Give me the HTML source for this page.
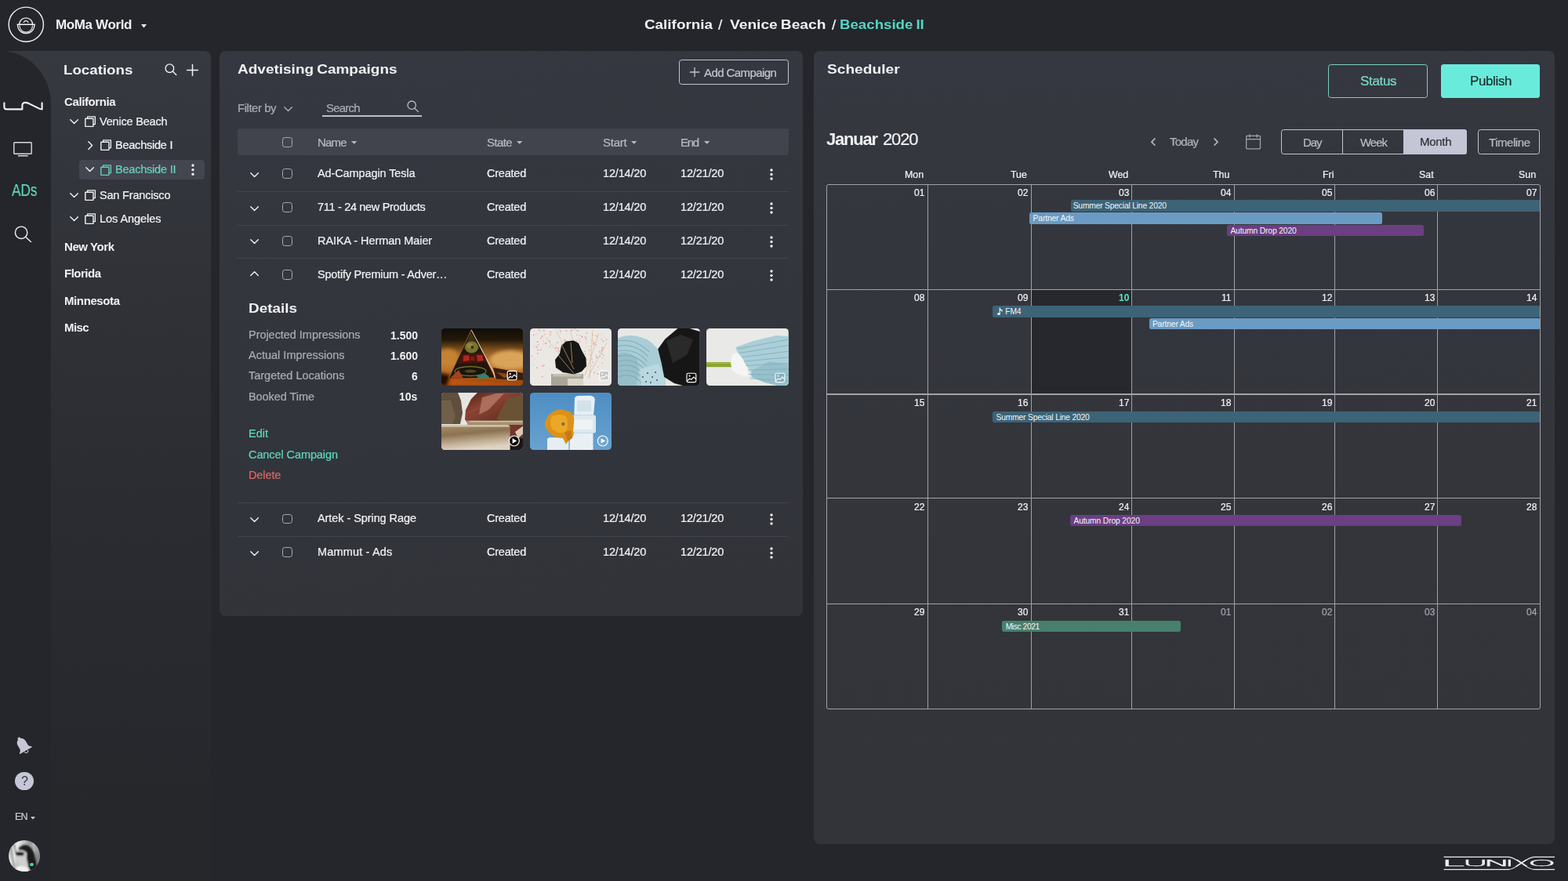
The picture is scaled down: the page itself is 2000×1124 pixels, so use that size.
<!DOCTYPE html>
<html lang="en">
<head>
<meta charset="utf-8">
<title>Advertising Campaigns - Beachside II</title>
<style>
*{box-sizing:border-box;margin:0;padding:0}
html,body{width:2000px;height:1124px;overflow:hidden;background:#25262b}
body{font-family:"Liberation Sans",Arial,Helvetica,sans-serif;color:#f1f1f4;-webkit-font-smoothing:antialiased}
#app{position:relative;width:2000px;height:1124px;overflow:hidden;background:#25262b}
.b,.t{position:absolute;display:block}
.t{white-space:nowrap;line-height:1;will-change:transform;-webkit-text-stroke:.22px currentColor}
.sx{transform-origin:0 50%}
svg{overflow:visible}
.panel{position:absolute;background:#34363c;border-radius:8px}
.ic{fill:none;stroke:#f1f1f4;stroke-width:1.5;stroke-linecap:round;stroke-linejoin:round}
ul,li{list-style:none}
button{font:inherit;color:inherit;background:none;border:0}

.hl{position:absolute;height:1px;background:#42444b}
.cb{position:absolute;width:12.8px;height:12.8px;border:1.4px solid #a9aab6;border-radius:3.4px}
.thumb{position:absolute;width:104.8px;height:73px;border-radius:4.5px;overflow:hidden}
.thumb svg{position:absolute;left:0;top:0}

.ev{position:absolute;height:14.4px;border-radius:2.5px;font-size:10.3px;line-height:15.8px;color:#f3f5f8;white-space:nowrap;overflow:hidden}
.gl{position:absolute;background:#a1a2a9}
</style>
</head>
<body>
<div id="app">
<header class="b" style="left:0;top:0;width:2000px;height:65px">
<svg class="b" style="left:10.0px;top:8.0px;" width="47" height="47" viewBox="0 0 47 47" aria-hidden="true"><circle cx="23.3" cy="23.2" r="22.1" class="ic" style="stroke-width:1.4"/><path d="M14.6 23.3a8.5 8.5 0 0 1 17 0" class="ic" style="stroke-width:1.25"/><path d="M12.1 23.3H34.3" class="ic" style="stroke-width:1.5"/><path d="M12.5 23.9a10.7 10.700 0 0 0 21.400 0" class="ic" style="stroke-width:1.25"/><path d="M14.9 24.8a8.300 8.300 0 0 0 16.600 0" class="ic" style="stroke-width:1.15"/><path d="M20.300 20.500a2.900 2.900 0 0 1 5.600 0" class="ic" style="stroke-width:1.2"/></svg>
<span class="t" style="left:71.4px;top:22.5px;font-size:17px;letter-spacing:-0.370px;color:#f1f1f4;font-weight:700;-webkit-text-stroke:0;">MoMa World</span>
<svg class="b" style="left:179.7px;top:30.5px;" width="7" height="4.6" viewBox="0 0 7 4.6" aria-hidden="true"><path d="M0 0h7L3.5 4.4z" fill="#f1f1f4"/></svg>
<span class="t sx" style="left:821.6px;top:24.0px;font-size:16px;transform:scaleX(1.1790);color:#f1f1f4;font-weight:700;-webkit-text-stroke:0;">California</span>
<span class="t" style="left:916.3px;top:22.1px;font-size:19px;color:#f1f1f4;">/</span>
<span class="t sx" style="left:930.6px;top:24.0px;font-size:16px;transform:scaleX(1.1979);color:#f1f1f4;font-weight:700;-webkit-text-stroke:0;word-spacing:-1px;">Venice Beach</span>
<span class="t" style="left:1060.8px;top:22.1px;font-size:19px;color:#f1f1f4;">/</span>
<span class="t sx" style="left:1071.2px;top:24.0px;font-size:16px;transform:scaleX(1.1670);color:#55d6c3;font-weight:700;-webkit-text-stroke:0;word-spacing:-1px;">Beachside II</span>
</header>
<aside class="panel locations" style="left:0;top:65px;width:268.9px;height:1059px;border-radius:0 8px 0 0;background:linear-gradient(180deg,#363940 0,#33363c 12%,#2f3137 32%,#2b2c32 55%,#28292e 78%,#26272b 92%)">
<h2 class="t sx" style="left:81.2px;top:16.5px;font-size:16px;transform:scaleX(1.1699);color:#f1f1f4;font-weight:700;-webkit-text-stroke:0;">Locations</h2>
<svg class="b" style="left:209.0px;top:15.2px;" width="18" height="18" viewBox="0 0 18 18" aria-hidden="true"><circle cx="7.4" cy="7.2" r="5.3" class="ic" style="stroke-width:1.4"/><path d="M11.4 11.200L15.800 15.600" class="ic" style="stroke-width:1.4"/></svg>
<svg class="b" style="left:237.7px;top:16.8px;" width="15" height="15" viewBox="0 0 15 15" aria-hidden="true"><path d="M7.5 0.6V14.400M0.600 7.500H14.400" class="ic" style="stroke-width:1.5"/></svg>
<span class="t" style="left:81.6px;top:57.4px;font-size:15px;letter-spacing:-0.398px;color:#f1f1f4;font-weight:700;-webkit-text-stroke:0;">California</span>
<svg class="b" style="left:88.8px;top:86.9px;" width="11.2" height="6.4" viewBox="0 0 11.2 6.4" aria-hidden="true"><path d="M0.8 0.8L5.6 5.6L10.4 0.8" class="ic" style="stroke:#f1f1f4;stroke-width:1.4"/></svg>
<svg class="b" style="left:108.0px;top:83.1px;" width="14.2" height="14.2" viewBox="0 0 14.2 14.2" aria-hidden="true"><path d="M3.6 3V0.8H13.4V10.6H11.2" class="ic" style="stroke:#f1f1f4;stroke-width:1.3"/><rect x="0.8" y="3.2" width="10.2" height="10.2" rx="0.6" class="ic" style="stroke:#f1f1f4;stroke-width:1.4"/></svg>
<span class="t" style="left:127.0px;top:83.1px;font-size:14.5px;letter-spacing:-0.198px;color:#f1f1f4;">Venice Beach</span>
<svg class="b" style="left:111.5px;top:114.8px;" width="6.4" height="11.2" viewBox="0 0 6.4 11.2" aria-hidden="true"><path d="M0.8 0.8L5.6 5.6L0.8 10.4" class="ic" style="stroke:#f1f1f4;stroke-width:1.4"/></svg>
<svg class="b" style="left:128.0px;top:113.2px;" width="14.2" height="14.2" viewBox="0 0 14.2 14.2" aria-hidden="true"><path d="M3.6 3V0.8H13.4V10.6H11.2" class="ic" style="stroke:#f1f1f4;stroke-width:1.3"/><rect x="0.8" y="3.2" width="10.2" height="10.2" rx="0.6" class="ic" style="stroke:#f1f1f4;stroke-width:1.4"/></svg>
<span class="t" style="left:147.0px;top:113.2px;font-size:14.5px;letter-spacing:-0.227px;color:#f1f1f4;">Beachside I</span>
<div class="b sel" style="left:101.0px;top:139.1px;width:160.0px;height:24.8px;background:#43454f;border-radius:4px"></div>
<svg class="b" style="left:109.0px;top:148.3px;" width="11.2" height="6.4" viewBox="0 0 11.2 6.4" aria-hidden="true"><path d="M0.8 0.8L5.6 5.6L10.4 0.8" class="ic" style="stroke:#f1f1f4;stroke-width:1.4"/></svg>
<svg class="b" style="left:128.0px;top:144.5px;" width="14.2" height="14.2" viewBox="0 0 14.2 14.2" aria-hidden="true"><path d="M3.6 3V0.8H13.4V10.6H11.2" class="ic" style="stroke:#66d1ba;stroke-width:1.3"/><rect x="0.8" y="3.2" width="10.2" height="10.2" rx="0.6" class="ic" style="stroke:#66d1ba;stroke-width:1.4"/></svg>
<span class="t" style="left:147.0px;top:144.4px;font-size:14.5px;letter-spacing:-0.209px;color:#66d1ba;">Beachside II</span>
<svg class="b" style="left:242.7px;top:142.9px;" width="6" height="17.2" viewBox="0 0 6 17.2" aria-hidden="true"><circle cx="3" cy="3.0" r="1.7" fill="#f1f1f4"/><circle cx="3" cy="8.6" r="1.7" fill="#f1f1f4"/><circle cx="3" cy="14.2" r="1.7" fill="#f1f1f4"/></svg>
<svg class="b" style="left:88.8px;top:180.8px;" width="11.2" height="6.4" viewBox="0 0 11.2 6.4" aria-hidden="true"><path d="M0.8 0.8L5.6 5.6L10.4 0.8" class="ic" style="stroke:#f1f1f4;stroke-width:1.4"/></svg>
<svg class="b" style="left:108.0px;top:177.0px;" width="14.2" height="14.2" viewBox="0 0 14.2 14.2" aria-hidden="true"><path d="M3.6 3V0.8H13.4V10.6H11.2" class="ic" style="stroke:#f1f1f4;stroke-width:1.3"/><rect x="0.8" y="3.2" width="10.2" height="10.2" rx="0.6" class="ic" style="stroke:#f1f1f4;stroke-width:1.4"/></svg>
<span class="t" style="left:127.0px;top:176.9px;font-size:14.5px;letter-spacing:-0.182px;color:#f1f1f4;">San Francisco</span>
<svg class="b" style="left:88.8px;top:211.2px;" width="11.2" height="6.4" viewBox="0 0 11.2 6.4" aria-hidden="true"><path d="M0.8 0.8L5.6 5.6L10.4 0.8" class="ic" style="stroke:#f1f1f4;stroke-width:1.4"/></svg>
<svg class="b" style="left:108.0px;top:207.4px;" width="14.2" height="14.2" viewBox="0 0 14.2 14.2" aria-hidden="true"><path d="M3.6 3V0.8H13.4V10.6H11.2" class="ic" style="stroke:#f1f1f4;stroke-width:1.3"/><rect x="0.8" y="3.2" width="10.2" height="10.2" rx="0.6" class="ic" style="stroke:#f1f1f4;stroke-width:1.4"/></svg>
<span class="t" style="left:127.0px;top:207.4px;font-size:14.5px;letter-spacing:-0.051px;color:#f1f1f4;">Los Angeles</span>
<span class="t" style="left:81.6px;top:241.8px;font-size:15px;letter-spacing:-0.425px;color:#f1f1f4;font-weight:700;-webkit-text-stroke:0;">New York</span>
<span class="t" style="left:81.6px;top:276.2px;font-size:15px;letter-spacing:-0.500px;color:#f1f1f4;font-weight:700;-webkit-text-stroke:0;">Florida</span>
<span class="t" style="left:81.6px;top:310.7px;font-size:15px;letter-spacing:-0.397px;color:#f1f1f4;font-weight:700;-webkit-text-stroke:0;">Minnesota</span>
<span class="t" style="left:81.6px;top:345.2px;font-size:15px;letter-spacing:-0.549px;color:#f1f1f4;font-weight:700;-webkit-text-stroke:0;">Misc</span>
</aside>
<nav class="b rail" style="left:0;top:65px;width:64.5px;height:1059px;background:#25262b;border-radius:0 64px 0 0/0 68px 0 0">
<svg class="b" style="left:4.0px;top:64.0px;" width="52" height="13" viewBox="0 0 52 13" aria-hidden="true"><path d="M1.4 2.2V7.4Q1.4 10.4 4.6 10.4H24.4V5.600Q24.4 1.700 28.600 1.900Q31.200 2.100 34 3.600L45.600 9.400Q47.400 10.400 49.600 10.400V2.200" class="ic" style="stroke-width:2.1"/></svg>
<svg class="b" style="left:16.6px;top:115.6px;" width="26" height="19" viewBox="0 0 26 19" aria-hidden="true"><rect x="0.8" y="0.8" width="22.4" height="14.4" rx="0.8" class="ic" style="stroke:#d9d9de;stroke-width:1.4"/><path d="M6.4 17.700H18.200" class="ic" style="stroke:#d9d9de;stroke-width:1.4"/></svg>
<span class="t ads sx" style="left:15.0px;top:166.9px;font-size:22.5px;transform:scaleX(0.7646);color:#5ed5bc;">ADs</span>
<svg class="b" style="left:18.0px;top:223.0px;" width="24" height="22" viewBox="0 0 24 22" aria-hidden="true"><circle cx="9.1" cy="8.8" r="7.7" class="ic" style="stroke-width:1.4"/><path d="M14.8 14.400L21.400 20.400" class="ic" style="stroke-width:1.4"/></svg>
<svg class="b" style="left:16.7px;top:874.0px;" width="24" height="25" viewBox="0 0 24 25" aria-hidden="true"><g transform="rotate(-30 12 11.500)"><path d="M12 0.4C10.9 0.4 10.1 1.200 10.1 2.200V2.800C7.400 3.700 6.200 6.300 6.200 9.100V14.200C6.200 16.200 4.600 17.600 3.100 18.600V19.700H20.900V18.600C19.400 17.600 17.800 16.200 17.800 14.200V9.100C17.800 6.300 16.600 3.700 13.900 2.800V2.200C13.900 1.200 13.100 0.400 12 0.400z" fill="#c6c7d6"/><path d="M9.700 20.300a2.300 2.300 0 0 0 4.600 0" fill="none" stroke="#c6c7d6" stroke-width="1.1"/></g></svg>
<div class="b help" style="left:19.4px;top:919.5px;width:23.6px;height:23.6px;border-radius:50%;background:#c6c7d6"></div>
<span class="t" style="left:26.8px;top:923.6px;font-size:16px;color:#33343c;-webkit-text-stroke:0;">?</span>
<span class="t" style="left:18.7px;top:971.0px;font-size:12.5px;letter-spacing:-0.865px;color:#c9cad2;">EN</span>
<svg class="b" style="left:38.8px;top:976.6px;" width="6" height="3.6" viewBox="0 0 6 3.6" aria-hidden="true"><path d="M0 0h6L3 3.4z" fill="#c9cad2"/></svg>
<svg class="b avatar" style="left:11.2px;top:1007.1px;" width="40" height="40" viewBox="0 0 40 40" aria-hidden="true"><defs><clipPath id="avc"><circle cx="20" cy="20" r="20"/></clipPath><filter id="avb" x="-20%" y="-20%" width="140%" height="140%"><feGaussianBlur stdDeviation="0.8"/></filter><linearGradient id="avg" x1="0" y1="0" x2="1" y2="0.3"><stop offset="0" stop-color="#b9b9b9"/><stop offset=".3" stop-color="#ececec"/><stop offset=".62" stop-color="#9c9c9c"/><stop offset=".8" stop-color="#dedede"/><stop offset="1" stop-color="#8a8a8a"/></linearGradient></defs><g clip-path="url(#avc)"><rect width="40" height="40" fill="url(#avg)"/><g filter="url(#avb)"><path d="M2 6L8 40M6 2L13 30M33 2L37 30M28 0L31 12" stroke="#7d7d7d" stroke-width="1.6" fill="none"/><path d="M13 10Q20 3 27 8Q33 13 34 22Q37 30 35 38L26 40L24 28Q22 22 23 16Q18 12 13 13z" fill="#1b1b1b"/><path d="M12 13Q18 11 23 16Q22 24 24 30L25 40H10Q9 36 13 32L11 27L9 22L11 19z" fill="#cfcfcf"/><path d="M9 15.5Q14 14 20 15.500L19 19.500Q14 20.500 10 19z" fill="#141414"/><path d="M10 34Q18 31 26 36L27 40H8z" fill="#f1f1f1"/></g></g></svg>
<div class="b online" style="left:38.0px;top:1035.5px;width:4.8px;height:4.8px;border-radius:50%;background:#3ddc97"></div>
</nav>
<section class="panel campaigns" style="left:280px;top:65px;width:743.6px;height:721px;background:linear-gradient(175deg,#353840 0,#33363d 35%,#313339 100%)">
<h2 class="t sx" style="left:23.0px;top:16.1px;font-size:16px;transform:scaleX(1.1873);color:#f1f1f4;font-weight:700;-webkit-text-stroke:0;word-spacing:-1px;">Advetising Campaigns</h2>
<div class="b btn-add" style="left:585.6px;top:11.4px;width:140.0px;height:31.4px;border:1.2px solid #c3c4cf;border-radius:3.5px"></div>
<svg class="b" style="left:599.6px;top:21.4px;" width="12" height="12" viewBox="0 0 12 12" aria-hidden="true"><path d="M6 0.3V11.7M0.3 6H11.7" class="ic" style="stroke:#c3c4cf;stroke-width:1.3"/></svg>
<span class="t" style="left:617.6px;top:19.8px;font-size:15px;letter-spacing:-0.585px;color:#c3c4cf;">Add Campaign</span>
<span class="t" style="left:23.2px;top:64.5px;font-size:15px;letter-spacing:-0.468px;color:#a9abb7;">Filter by</span>
<svg class="b" style="left:82.0px;top:71.0px;" width="11.2" height="6.4" viewBox="0 0 11.2 6.4" aria-hidden="true"><path d="M0.8 0.8L5.6 5.6L10.4 0.8" class="ic" style="stroke:#a9abb7;stroke-width:1.4"/></svg>
<span class="t" style="left:136.0px;top:64.5px;font-size:15px;letter-spacing:-0.786px;color:#a9abb7;">Search</span>
<div class="b uline" style="left:131.4px;top:82.0px;width:126.2px;height:1.5px;background:#bcbdc8"></div>
<svg class="b" style="left:239.0px;top:62.5px;" width="16" height="16" viewBox="0 0 16 16" aria-hidden="true"><circle cx="6.2" cy="6.2" r="5.2" class="ic" style="stroke:#b9bac6;stroke-width:1.3"/><path d="M10 10.2L14.6 14.6" class="ic" style="stroke:#b9bac6;stroke-width:1.3"/></svg>
<div class="b thead" style="left:22.8px;top:99.0px;width:702.8px;height:33.6px;background:#41434d;border-radius:3px"></div>
<span class="cb" style="left:80.2px;top:110.0px"></span>
<span class="t" style="left:125.4px;top:108.5px;font-size:15px;letter-spacing:-0.805px;color:#b7b9c6;">Name</span>
<svg class="b" style="left:168.0px;top:115.0px;" width="7.4" height="4" viewBox="0 0 7.4 4" aria-hidden="true"><path d="M0 0h7.4L3.7 3.8z" fill="#b7b9c6"/></svg>
<span class="t" style="left:341.4px;top:108.5px;font-size:15px;letter-spacing:-0.606px;color:#b7b9c6;">State</span>
<svg class="b" style="left:379.0px;top:115.0px;" width="7.4" height="4" viewBox="0 0 7.4 4" aria-hidden="true"><path d="M0 0h7.4L3.7 3.8z" fill="#b7b9c6"/></svg>
<span class="t" style="left:489.0px;top:108.5px;font-size:15px;letter-spacing:-0.270px;color:#b7b9c6;">Start</span>
<svg class="b" style="left:525.0px;top:115.0px;" width="7.4" height="4" viewBox="0 0 7.4 4" aria-hidden="true"><path d="M0 0h7.4L3.7 3.8z" fill="#b7b9c6"/></svg>
<span class="t" style="left:588.4px;top:108.5px;font-size:15px;letter-spacing:-1.345px;color:#b7b9c6;">End</span>
<svg class="b" style="left:618.0px;top:115.0px;" width="7.4" height="4" viewBox="0 0 7.4 4" aria-hidden="true"><path d="M0 0h7.4L3.7 3.8z" fill="#b7b9c6"/></svg>
<svg class="b" style="left:39.2px;top:154.5px;" width="11.2" height="6.4" viewBox="0 0 11.2 6.4" aria-hidden="true"><path d="M0.8 0.8L5.6 5.6L10.4 0.8" class="ic" style="stroke:#f1f1f4;stroke-width:1.4"/></svg>
<span class="cb" style="left:80.2px;top:150.4px"></span>
<span class="t" style="left:125.4px;top:148.8px;font-size:14.5px;letter-spacing:-0.105px;color:#f1f1f4;">Ad-Campagin Tesla</span>
<span class="t" style="left:341.4px;top:148.8px;font-size:14.5px;letter-spacing:-0.231px;color:#f1f1f4;">Created</span>
<span class="t" style="left:488.5px;top:148.8px;font-size:14.5px;letter-spacing:-0.163px;color:#f1f1f4;">12/14/20</span>
<span class="t" style="left:587.6px;top:148.8px;font-size:14.5px;letter-spacing:-0.163px;color:#f1f1f4;">12/21/20</span>
<svg class="b" style="left:700.5px;top:148.9px;" width="6" height="17" viewBox="0 0 6 17" aria-hidden="true"><circle cx="3" cy="3.0" r="1.7" fill="#f1f1f4"/><circle cx="3" cy="8.5" r="1.7" fill="#f1f1f4"/><circle cx="3" cy="14.0" r="1.7" fill="#f1f1f4"/></svg>
<svg class="b" style="left:39.2px;top:197.5px;" width="11.2" height="6.4" viewBox="0 0 11.2 6.4" aria-hidden="true"><path d="M0.8 0.8L5.6 5.6L10.4 0.8" class="ic" style="stroke:#f1f1f4;stroke-width:1.4"/></svg>
<span class="cb" style="left:80.2px;top:193.4px"></span>
<span class="t" style="left:125.4px;top:191.9px;font-size:14.5px;letter-spacing:-0.311px;color:#f1f1f4;">711 - 24 new Products</span>
<span class="t" style="left:341.4px;top:191.9px;font-size:14.5px;letter-spacing:-0.231px;color:#f1f1f4;">Created</span>
<span class="t" style="left:488.5px;top:191.9px;font-size:14.5px;letter-spacing:-0.163px;color:#f1f1f4;">12/14/20</span>
<span class="t" style="left:587.6px;top:191.9px;font-size:14.5px;letter-spacing:-0.163px;color:#f1f1f4;">12/21/20</span>
<svg class="b" style="left:700.5px;top:191.9px;" width="6" height="17" viewBox="0 0 6 17" aria-hidden="true"><circle cx="3" cy="3.0" r="1.7" fill="#f1f1f4"/><circle cx="3" cy="8.5" r="1.7" fill="#f1f1f4"/><circle cx="3" cy="14.0" r="1.7" fill="#f1f1f4"/></svg>
<svg class="b" style="left:39.2px;top:240.3px;" width="11.2" height="6.4" viewBox="0 0 11.2 6.4" aria-hidden="true"><path d="M0.8 0.8L5.6 5.6L10.4 0.8" class="ic" style="stroke:#f1f1f4;stroke-width:1.4"/></svg>
<span class="cb" style="left:80.2px;top:236.2px"></span>
<span class="t" style="left:125.4px;top:234.6px;font-size:14.5px;letter-spacing:-0.066px;color:#f1f1f4;">RAIKA - Herman Maier</span>
<span class="t" style="left:341.4px;top:234.6px;font-size:14.5px;letter-spacing:-0.231px;color:#f1f1f4;">Created</span>
<span class="t" style="left:488.5px;top:234.6px;font-size:14.5px;letter-spacing:-0.163px;color:#f1f1f4;">12/14/20</span>
<span class="t" style="left:587.6px;top:234.6px;font-size:14.5px;letter-spacing:-0.163px;color:#f1f1f4;">12/21/20</span>
<svg class="b" style="left:700.5px;top:234.7px;" width="6" height="17" viewBox="0 0 6 17" aria-hidden="true"><circle cx="3" cy="3.0" r="1.7" fill="#f1f1f4"/><circle cx="3" cy="8.5" r="1.7" fill="#f1f1f4"/><circle cx="3" cy="14.0" r="1.7" fill="#f1f1f4"/></svg>
<svg class="b" style="left:39.2px;top:281.3px;" width="11.2" height="6.4" viewBox="0 0 11.2 6.4" aria-hidden="true"><path d="M0.8 5.6L5.6 0.8L10.4 5.6" class="ic" style="stroke:#f1f1f4;stroke-width:1.4"/></svg>
<span class="cb" style="left:80.2px;top:279.2px"></span>
<span class="t" style="left:125.4px;top:277.6px;font-size:14.5px;letter-spacing:-0.228px;color:#f1f1f4;">Spotify Premium - Adver…</span>
<span class="t" style="left:341.4px;top:277.6px;font-size:14.5px;letter-spacing:-0.231px;color:#f1f1f4;">Created</span>
<span class="t" style="left:488.5px;top:277.6px;font-size:14.5px;letter-spacing:-0.163px;color:#f1f1f4;">12/14/20</span>
<span class="t" style="left:587.6px;top:277.6px;font-size:14.5px;letter-spacing:-0.163px;color:#f1f1f4;">12/21/20</span>
<svg class="b" style="left:700.5px;top:277.7px;" width="6" height="17" viewBox="0 0 6 17" aria-hidden="true"><circle cx="3" cy="3.0" r="1.7" fill="#f1f1f4"/><circle cx="3" cy="8.5" r="1.7" fill="#f1f1f4"/><circle cx="3" cy="14.0" r="1.7" fill="#f1f1f4"/></svg>
<svg class="b" style="left:39.2px;top:594.7px;" width="11.2" height="6.4" viewBox="0 0 11.2 6.4" aria-hidden="true"><path d="M0.8 0.8L5.6 5.6L10.4 0.8" class="ic" style="stroke:#f1f1f4;stroke-width:1.4"/></svg>
<span class="cb" style="left:80.2px;top:590.6px"></span>
<span class="t" style="left:125.4px;top:589.0px;font-size:14.5px;letter-spacing:-0.074px;color:#f1f1f4;">Artek - Spring Rage</span>
<span class="t" style="left:341.4px;top:589.0px;font-size:14.5px;letter-spacing:-0.231px;color:#f1f1f4;">Created</span>
<span class="t" style="left:488.5px;top:589.0px;font-size:14.5px;letter-spacing:-0.163px;color:#f1f1f4;">12/14/20</span>
<span class="t" style="left:587.6px;top:589.0px;font-size:14.5px;letter-spacing:-0.163px;color:#f1f1f4;">12/21/20</span>
<svg class="b" style="left:700.5px;top:589.1px;" width="6" height="17" viewBox="0 0 6 17" aria-hidden="true"><circle cx="3" cy="3.0" r="1.7" fill="#f1f1f4"/><circle cx="3" cy="8.5" r="1.7" fill="#f1f1f4"/><circle cx="3" cy="14.0" r="1.7" fill="#f1f1f4"/></svg>
<svg class="b" style="left:39.2px;top:637.5px;" width="11.2" height="6.4" viewBox="0 0 11.2 6.4" aria-hidden="true"><path d="M0.8 0.8L5.6 5.6L10.4 0.8" class="ic" style="stroke:#f1f1f4;stroke-width:1.4"/></svg>
<span class="cb" style="left:80.2px;top:633.4px"></span>
<span class="t" style="left:125.4px;top:631.9px;font-size:14.5px;letter-spacing:0.158px;color:#f1f1f4;">Mammut - Ads</span>
<span class="t" style="left:341.4px;top:631.9px;font-size:14.5px;letter-spacing:-0.231px;color:#f1f1f4;">Created</span>
<span class="t" style="left:488.5px;top:631.9px;font-size:14.5px;letter-spacing:-0.163px;color:#f1f1f4;">12/14/20</span>
<span class="t" style="left:587.6px;top:631.9px;font-size:14.5px;letter-spacing:-0.163px;color:#f1f1f4;">12/21/20</span>
<svg class="b" style="left:700.5px;top:631.9px;" width="6" height="17" viewBox="0 0 6 17" aria-hidden="true"><circle cx="3" cy="3.0" r="1.7" fill="#f1f1f4"/><circle cx="3" cy="8.5" r="1.7" fill="#f1f1f4"/><circle cx="3" cy="14.0" r="1.7" fill="#f1f1f4"/></svg>
<div class="hl" style="left:22.8px;top:178.5px;width:702.8px"></div>
<div class="hl" style="left:22.8px;top:221.5px;width:702.8px"></div>
<div class="hl" style="left:22.8px;top:264.1px;width:702.8px"></div>
<div class="hl" style="left:22.8px;top:575.5px;width:702.8px"></div>
<div class="hl" style="left:22.8px;top:618.5px;width:702.8px"></div>
<h3 class="t sx" style="left:37.0px;top:320.5px;font-size:16px;transform:scaleX(1.1816);color:#f1f1f4;font-weight:700;-webkit-text-stroke:0;">Details</h3>
<span class="t" style="left:37.1px;top:355.1px;font-size:14.5px;letter-spacing:-0.043px;color:#a9abb7;">Projected Impressions</span>
<span class="t" style="left:217.6px;top:355.5px;font-size:14px;color:#f1f1f4;font-weight:700;-webkit-text-stroke:0;">1.500</span>
<span class="t" style="left:37.1px;top:381.2px;font-size:14.5px;letter-spacing:0.006px;color:#a9abb7;">Actual Impressions</span>
<span class="t" style="left:217.6px;top:381.7px;font-size:14px;color:#f1f1f4;font-weight:700;-webkit-text-stroke:0;">1.600</span>
<span class="t" style="left:37.1px;top:407.4px;font-size:14.5px;letter-spacing:-0.008px;color:#a9abb7;">Targeted Locations</span>
<span class="t" style="left:244.8px;top:407.8px;font-size:14px;color:#f1f1f4;font-weight:700;-webkit-text-stroke:0;">6</span>
<span class="t" style="left:37.1px;top:433.6px;font-size:14.5px;letter-spacing:-0.063px;color:#a9abb7;">Booked Time</span>
<span class="t" style="left:229.2px;top:434.0px;font-size:14px;color:#f1f1f4;font-weight:700;-webkit-text-stroke:0;">10s</span>
<span class="t" style="left:37.1px;top:481.1px;font-size:14.5px;letter-spacing:0.005px;color:#5ed5bc;">Edit</span>
<span class="t" style="left:37.1px;top:507.5px;font-size:14.5px;letter-spacing:-0.090px;color:#5ed5bc;">Cancel Campaign</span>
<span class="t" style="left:37.1px;top:533.6px;font-size:14.5px;letter-spacing:-0.103px;color:#e3645f;">Delete</span>
<figure class="thumb" style="left:282.7px;top:354.0px"><svg width="104.8" height="73" viewBox="0 0 104.8 73" preserveAspectRatio="none" role="img"><defs><filter id="bl0" x="-20%" y="-20%" width="140%" height="140%"><feGaussianBlur stdDeviation="0.7"/></filter><filter id="bh0" x="-30%" y="-30%" width="160%" height="160%"><feGaussianBlur stdDeviation="2.2"/></filter><linearGradient id="g0a" x1="0" y1="0" x2="0" y2="1"><stop offset="0" stop-color="#100d09"/><stop offset=".2" stop-color="#241809"/><stop offset=".38" stop-color="#85541e"/><stop offset=".6" stop-color="#c4853a"/><stop offset=".84" stop-color="#b1621c"/><stop offset="1" stop-color="#7e340b"/></linearGradient></defs><rect width="104.8" height="73" fill="url(#g0a)"/><g filter="url(#bh0)"><ellipse cx="88" cy="40" rx="26" ry="12" fill="#d9a45a"/><ellipse cx="8" cy="36" rx="14" ry="10" fill="#c48232"/><path d="M0 63L30 66.500L104.8 70V73H0z" fill="#c2560f"/><path d="M-4 56L12 60L8 73H-4z" fill="#241006"/></g><g filter="url(#bl0)"><path d="M66 50L104.8 57V66L70 64.500z" fill="#3a1c0a"/><path d="M70 56L96 60L80 63z" fill="#8a4a14"/><path d="M38.2 1.8L9.4 63.6L68 62.8z" fill="#24160e"/><path d="M38.2 5L28.500 26L49 26z" fill="#3c3018"/><ellipse cx="38.5" cy="24" rx="8.6" ry="7.4" fill="#77742f"/><ellipse cx="36.500" cy="22" rx="4" ry="3" fill="#8f8b3d"/><circle cx="39.4" cy="24" r="1.900" fill="#4a2414"/><path d="M26 33L54 31L58 43L21 45z" fill="#4a1610"/><path d="M28 35l7-1l1 7l-8 1zM45 34l7 0l2 7l-8 1z" fill="#b4261c"/><path d="M37 36l5 0l0 5l-5 0z" fill="#7a1c14"/><ellipse cx="37" cy="54.6" rx="20" ry="6" fill="#17140e" stroke="#7c7a36" stroke-width="1.1"/><ellipse cx="37" cy="54.6" rx="7.500" ry="2" fill="#5c4018"/><path d="M45 60.500L56 57.500L62 62.800L47 64z" fill="#2a8278"/><path d="M11 63.400L22 53L28 63.200z" fill="#a8401a"/><path d="M38.2 1.8L66.600 56L68 62.800" fill="none" stroke="#efe2ce" stroke-width="1"/><path d="M38.2 1.8L9.4 63.6" fill="none" stroke="#a8702e" stroke-width=".8"/></g><g transform="translate(83.6,53.8)" fill="none" stroke="#fff" stroke-width="1.15" stroke-linejoin="round" stroke-linecap="round"><rect x="0.6" y="0.6" width="11.8" height="11.4" rx="1.8" fill="rgba(0,0,0,.55)"/><circle cx="4.2" cy="4" r="1.1" fill="#fff" stroke="none"/><path d="M1 10.4L4.4 7.4L6.4 8.8L9.4 5.4L12 7.8"/></g></svg></figure>
<figure class="thumb" style="left:395.5px;top:354.0px"><svg width="104.8" height="73" viewBox="0 0 104.8 73" preserveAspectRatio="none" role="img"><defs><filter id="bl1" x="-20%" y="-20%" width="140%" height="140%"><feGaussianBlur stdDeviation="0.7"/></filter><filter id="bh1" x="-30%" y="-30%" width="160%" height="160%"><feGaussianBlur stdDeviation="2.2"/></filter></defs><rect width="104.8" height="73" fill="#ebe8e4"/><g filter="url(#bl1)"><g fill="#e59a9c" opacity=".85"><circle cx="32.4" cy="19.9" r="0.5"/><circle cx="52.4" cy="2.7" r="0.8"/><circle cx="5.5" cy="3.0" r="0.6"/><circle cx="41.9" cy="34.0" r="0.6"/><circle cx="61.0" cy="48.5" r="0.7"/><circle cx="93.8" cy="25.9" r="0.7"/><circle cx="15.6" cy="9.9" r="1.0"/><circle cx="19.0" cy="19.5" r="0.7"/><circle cx="53.5" cy="2.7" r="0.6"/><circle cx="66.0" cy="10.1" r="0.9"/><circle cx="44.6" cy="24.0" r="0.9"/><circle cx="24.9" cy="16.2" r="1.0"/><circle cx="70.6" cy="29.4" r="0.6"/><circle cx="41.3" cy="34.9" r="0.8"/><circle cx="5.7" cy="23.2" r="0.8"/><circle cx="84.3" cy="21.2" r="0.9"/><circle cx="56.5" cy="25.4" r="1.1"/><circle cx="46.6" cy="2.8" r="0.9"/><circle cx="62.8" cy="56.3" r="0.7"/><circle cx="38.3" cy="1.7" r="0.8"/><circle cx="17.8" cy="2.7" r="1.0"/><circle cx="14.2" cy="12.3" r="1.0"/><circle cx="9.6" cy="16.9" r="1.0"/><circle cx="79.0" cy="38.9" r="0.7"/><circle cx="35.7" cy="60.6" r="0.6"/><circle cx="18.6" cy="7.8" r="0.8"/><circle cx="57.4" cy="1.1" r="0.8"/><circle cx="36.7" cy="28.6" r="0.9"/><circle cx="50.5" cy="20.6" r="0.5"/><circle cx="86.6" cy="58.0" r="1.0"/><circle cx="38.9" cy="4.0" r="0.9"/><circle cx="7.9" cy="7.1" r="0.6"/><circle cx="34.0" cy="1.0" r="0.6"/><circle cx="11.5" cy="1.7" r="1.0"/><circle cx="59.7" cy="8.3" r="0.7"/><circle cx="36.2" cy="25.6" r="1.1"/><circle cx="45.8" cy="3.5" r="0.6"/><circle cx="34.2" cy="25.0" r="0.6"/><circle cx="4.2" cy="46.9" r="0.6"/><circle cx="53.1" cy="16.3" r="1.1"/><circle cx="83.2" cy="8.6" r="0.7"/><circle cx="17.7" cy="47.0" r="1.0"/><circle cx="33.0" cy="24.5" r="1.1"/><circle cx="82.1" cy="56.2" r="0.9"/><circle cx="23.3" cy="11.3" r="0.5"/><circle cx="4.6" cy="8.5" r="0.9"/><circle cx="91.9" cy="28.2" r="1.1"/><circle cx="91.8" cy="7.4" r="0.6"/><circle cx="20.5" cy="19.1" r="1.0"/><circle cx="81.0" cy="19.9" r="1.0"/><circle cx="10.0" cy="27.4" r="1.0"/><circle cx="72.5" cy="6.2" r="1.0"/><circle cx="33.3" cy="61.1" r="0.7"/><circle cx="39.7" cy="53.2" r="0.6"/><circle cx="13.9" cy="27.2" r="1.0"/><circle cx="15.7" cy="61.4" r="0.9"/><circle cx="34.9" cy="4.8" r="0.5"/><circle cx="93.3" cy="16.3" r="1.1"/><circle cx="42.8" cy="56.4" r="0.6"/><circle cx="25.7" cy="8.0" r="0.9"/><circle cx="26.4" cy="4.8" r="1.0"/><circle cx="35.3" cy="17.9" r="1.0"/><circle cx="41.5" cy="46.1" r="0.8"/><circle cx="51.2" cy="13.8" r="0.6"/><circle cx="2.4" cy="35.5" r="0.8"/><circle cx="70.2" cy="10.5" r="0.8"/><circle cx="54.2" cy="33.4" r="0.8"/><circle cx="25.4" cy="23.4" r="0.8"/><circle cx="54.8" cy="59.2" r="0.8"/><circle cx="59.6" cy="15.9" r="0.9"/><circle cx="44.5" cy="14.9" r="1.1"/><circle cx="67.7" cy="60.1" r="0.7"/><circle cx="54.6" cy="56.9" r="0.6"/><circle cx="13.4" cy="3.1" r="0.6"/><circle cx="8.9" cy="23.7" r="1.0"/><circle cx="16.5" cy="20.1" r="0.6"/><circle cx="85.0" cy="37.0" r="1.1"/><circle cx="39.4" cy="29.7" r="1.0"/><circle cx="17.2" cy="16.0" r="0.7"/><circle cx="20.4" cy="21.9" r="0.5"/><circle cx="54.1" cy="1.5" r="0.7"/><circle cx="60.6" cy="2.9" r="1.1"/><circle cx="76.1" cy="33.4" r="0.7"/><circle cx="5.7" cy="38.7" r="0.6"/><circle cx="41.7" cy="56.2" r="0.7"/><circle cx="16.0" cy="48.3" r="0.9"/><circle cx="10.4" cy="21.0" r="0.8"/><circle cx="8.8" cy="50.3" r="1.0"/><circle cx="9.9" cy="32.1" r="1.0"/><circle cx="44.7" cy="17.0" r="1.1"/><circle cx="71.6" cy="13.4" r="0.8"/><circle cx="70.6" cy="12.6" r="0.6"/><circle cx="63.8" cy="16.5" r="0.7"/><circle cx="73.0" cy="39.9" r="0.6"/><circle cx="80.0" cy="15.5" r="0.7"/><circle cx="62.7" cy="18.5" r="0.5"/><circle cx="88.4" cy="31.1" r="0.6"/><circle cx="79.1" cy="47.3" r="0.6"/><circle cx="91.5" cy="26.2" r="0.7"/><circle cx="92.0" cy="24.5" r="0.8"/><circle cx="86.8" cy="49.3" r="0.7"/><circle cx="92.0" cy="37.7" r="0.8"/><circle cx="76.6" cy="22.6" r="0.5"/><circle cx="66.7" cy="11.0" r="0.9"/><circle cx="71.2" cy="14.9" r="0.5"/><circle cx="92.3" cy="44.6" r="0.8"/><circle cx="72.1" cy="18.2" r="0.6"/><circle cx="78.5" cy="14.6" r="0.7"/><circle cx="71.5" cy="48.4" r="1.0"/><circle cx="81.7" cy="18.3" r="1.0"/><circle cx="73.1" cy="23.0" r="0.5"/><circle cx="75.7" cy="27.9" r="0.8"/><circle cx="69.2" cy="29.2" r="0.5"/><circle cx="71.5" cy="11.8" r="0.7"/><circle cx="63.5" cy="8.9" r="0.7"/><circle cx="70.4" cy="32.6" r="0.8"/><circle cx="89.0" cy="35.6" r="0.9"/><circle cx="93.6" cy="24.4" r="0.7"/><circle cx="97.5" cy="14.3" r="0.9"/><circle cx="85.2" cy="9.8" r="0.9"/><circle cx="94.1" cy="34.3" r="0.9"/><circle cx="91.2" cy="13.9" r="0.8"/><circle cx="80.2" cy="43.1" r="0.9"/><circle cx="91.8" cy="32.5" r="0.9"/><circle cx="86.6" cy="37.1" r="0.6"/><circle cx="63.1" cy="13.6" r="0.7"/><circle cx="65.8" cy="43.1" r="0.8"/><circle cx="84.6" cy="34.3" r="0.8"/><circle cx="79.6" cy="8.1" r="0.9"/><circle cx="88.9" cy="29.1" r="0.8"/></g><g stroke="#dcb48c" stroke-width=".7" fill="none" opacity=".9"><path d="M60 60L20 12M64 56L52 4M70 60L88 6M74 62L98 18M62 58L34 4M76 64L80 2"/></g><path d="M27 58H68V73H27z" fill="#a9a398"/><path d="M29 58h37v3.600h-37z" fill="#c4bfb4"/><path d="M48 64h20v9h-20z" fill="#d8d4c8"/><path d="M46 16.500L56 15.500L62 19L66 28L71.5 38L72 48L66 55L56 58.500L42 56L33 50L32 40L38 32L40 22z" fill="#171614"/><g stroke="#c9975f" stroke-width=".8" fill="none"><path d="M36 34L58 60M40 20L56 52M52 18L54 44"/></g></g><g transform="translate(88,53.8)" fill="none" stroke="#fbfbfb" stroke-width="1.15" stroke-linejoin="round" stroke-linecap="round"><rect x="0.6" y="0.6" width="11.8" height="11.4" rx="1.8" fill="rgba(160,160,160,.45)"/><circle cx="4.2" cy="4" r="1.1" fill="#fbfbfb" stroke="none"/><path d="M1 10.4L4.4 7.4L6.4 8.8L9.4 5.4L12 7.8"/></g></svg></figure>
<figure class="thumb" style="left:508.3px;top:354.0px"><svg width="104.8" height="73" viewBox="0 0 104.8 73" preserveAspectRatio="none" role="img"><defs><filter id="bl2" x="-20%" y="-20%" width="140%" height="140%"><feGaussianBlur stdDeviation="0.7"/></filter><filter id="bh2" x="-30%" y="-30%" width="160%" height="160%"><feGaussianBlur stdDeviation="2.2"/></filter></defs><rect width="104.8" height="73" fill="#e7e8e5"/><g filter="url(#bl2)"><path d="M0 12.400Q12 8 22 9.500Q38 12 46 21Q54 28 58 40L60 57L61 73H14L0 69z" fill="#a9cdd6"/><path d="M0 32Q14 28 24 38Q28 50 24 73H0z" fill="#96bfca"/><g stroke="#7da8b5" stroke-width="1.1" fill="none" opacity=".8"><path d="M0.0 16.0Q22.0 12.0 40.0 30.0" /><path d="M0.0 22.5Q22.0 18.2 38.8 36.0" /><path d="M0.0 29.0Q22.0 24.4 37.6 42.0" /><path d="M0.0 35.5Q22.0 30.6 36.4 48.0" /><path d="M0.0 42.0Q22.0 36.8 35.2 54.0" /><path d="M0.0 48.5Q22.0 43.0 34.0 60.0" /><path d="M0.0 55.0Q22.0 49.2 32.8 66.0" /><path d="M0.0 61.5Q22.0 55.4 31.6 72.0" /></g><path d="M28 52L52 45L58 58L61 73H30z" fill="#b9d8e0"/><g fill="#2f4a55"><circle cx="32" cy="62" r=".9"/><circle cx="38" cy="57" r=".9"/><circle cx="44" cy="62" r=".9"/><circle cx="36" cy="68" r=".9"/><circle cx="48" cy="56" r=".9"/><circle cx="42" cy="69" r=".9"/><circle cx="50" cy="66" r=".9"/></g><path d="M76.500 0L92 0L98 2L104.800 4V73H83L72 70L59.200 62L55.800 44.600L51.200 26.200L60.400 13.600z" fill="#181818"/><path d="M62 16L80 8L96 14L88 34L70 44z" fill="#2a2a2a"/></g><g transform="translate(87.4,56.6)" fill="none" stroke="#fff" stroke-width="1.15" stroke-linejoin="round" stroke-linecap="round"><rect x="0.6" y="0.6" width="11.8" height="11.4" rx="1.8" fill="rgba(0,0,0,.55)"/><circle cx="4.2" cy="4" r="1.1" fill="#fff" stroke="none"/><path d="M1 10.4L4.4 7.4L6.4 8.8L9.4 5.4L12 7.8"/></g></svg></figure>
<figure class="thumb" style="left:621.1px;top:354.0px"><svg width="104.8" height="73" viewBox="0 0 104.8 73" preserveAspectRatio="none" role="img"><defs><filter id="bl3" x="-20%" y="-20%" width="140%" height="140%"><feGaussianBlur stdDeviation="0.7"/></filter><filter id="bh3" x="-30%" y="-30%" width="160%" height="160%"><feGaussianBlur stdDeviation="2.2"/></filter></defs><rect width="104.8" height="73" fill="#e9eae7"/><g filter="url(#bl3)"><path d="M0 43H32.500V49.200H0z" fill="#8ba62c"/><path d="M0 43.600H32V45H0z" fill="#a5bd44"/><path d="M37 24L60 16L88.800 9L104.800 10V73H91L73.800 68.800L57.700 61.900L55.400 52.700L44 40z" fill="#abcfd9"/><path d="M58 54L80 42L104.800 46V73H91L73.800 68.800L57.700 61.900z" fill="#97c0cc"/><g stroke="#7fabb9" stroke-width="1" fill="none" opacity=".8"><path d="M40.0 26.0L104.8 14.0"/><path d="M42.2 31.4L104.8 21.6"/><path d="M44.4 36.8L104.8 29.2"/><path d="M46.6 42.2L104.8 36.8"/><path d="M48.8 47.6L104.8 44.4"/><path d="M51.0 53.0L104.8 52.0"/><path d="M53.2 58.4L104.8 59.6"/><path d="M55.4 63.8L104.8 67.2"/></g><path d="M33 33L40 31L46 38L52 50L54 60L48 62L40 58L33 54L31 44z" fill="#f5f5f3"/></g><g transform="translate(87.4,56.6)" fill="none" stroke="#f4f8f8" stroke-width="1.15" stroke-linejoin="round" stroke-linecap="round"><rect x="0.6" y="0.6" width="11.8" height="11.4" rx="1.8" fill="rgba(120,160,170,.45)"/><circle cx="4.2" cy="4" r="1.1" fill="#f4f8f8" stroke="none"/><path d="M1 10.4L4.4 7.4L6.4 8.8L9.4 5.4L12 7.8"/></g></svg></figure>
<figure class="thumb" style="left:282.7px;top:435.6px"><svg width="104.8" height="73" viewBox="0 0 104.8 73" preserveAspectRatio="none" role="img"><defs><filter id="bl4" x="-20%" y="-20%" width="140%" height="140%"><feGaussianBlur stdDeviation="0.7"/></filter><filter id="bh4" x="-30%" y="-30%" width="160%" height="160%"><feGaussianBlur stdDeviation="2.2"/></filter><linearGradient id="g4a" x1="0" y1="0" x2="1" y2="1"><stop offset="0" stop-color="#4c2018"/><stop offset=".35" stop-color="#8c4434"/><stop offset=".7" stop-color="#6c3226"/><stop offset="1" stop-color="#42241a"/></linearGradient><linearGradient id="g4b" x1="0" y1="0" x2="0.25" y2="1"><stop offset="0" stop-color="#ab9270"/><stop offset=".4" stop-color="#8a7252"/><stop offset=".75" stop-color="#c2b094"/><stop offset="1" stop-color="#dfd3c2"/></linearGradient></defs><rect width="104.8" height="73" fill="#e6e4e2"/><g filter="url(#bl4)"><path d="M0 0H21L25 10L27 26L24 40H0z" fill="#5f503e"/><path d="M0 10H12L18 30L14 40H0z" fill="#6f5e49"/><path d="M46 0H104.800V40H34L30 34L31 22L38 8z" fill="url(#g4a)"/><path d="M52 6L70 1H80L60 22L48 28z" fill="#b87c6a" opacity=".75"/><path d="M84 8L104.800 2V36L86 38L70 34z" fill="#6b5336"/><path d="M32 35.400H104.800V43H34z" fill="#a58f72"/><path d="M36 36h68.800v1.400H36z" fill="#d0c0a4"/><path d="M86 41H104.800V73H86z" fill="#73362a"/><path d="M94 50L104.800 42V52L98 58z" fill="#d8c8b4"/><path d="M88 58H104.800V73H84z" fill="#1f1812"/><path d="M0 41.200H84Q87.600 41.200 87.600 45V73H0z" fill="url(#g4b)"/><path d="M0 41.200H84Q87 41.200 87.400 43.400H0z" fill="#d9c9ad"/></g><g><circle cx="92.8" cy="61.5" r="6.5" fill="rgba(10,10,10,.8)" stroke="#fff" stroke-width="1.2"/><path d="M90.6 58.2l5.6 3.3l-5.6 3.3z" fill="#fff"/></g></svg></figure>
<figure class="thumb" style="left:395.5px;top:435.6px"><svg width="104.8" height="73" viewBox="0 0 104.8 73" preserveAspectRatio="none" role="img"><defs><filter id="bl5" x="-20%" y="-20%" width="140%" height="140%"><feGaussianBlur stdDeviation="0.7"/></filter><filter id="bh5" x="-30%" y="-30%" width="160%" height="160%"><feGaussianBlur stdDeviation="2.2"/></filter><linearGradient id="g5a" x1="0" y1="0" x2="0" y2="1"><stop offset="0" stop-color="#4d8ec4"/><stop offset="1" stop-color="#68a2cf"/></linearGradient></defs><rect width="104.8" height="73" fill="url(#g5a)"/><g filter="url(#bl5)"><path d="M22 60Q22 57 26 57.300H46Q49.400 57.300 49.400 61V73H22z" fill="#e6eef3"/><path d="M51 51.500H80.500V73H50.600z" fill="#e9f0f4"/><path d="M54 30Q54 28.500 57 28.500H81Q84 28.500 84 31V49Q84 51.500 81 51.500H57Q54 51.500 54 49z" fill="#dde8ef"/><path d="M57 8Q57 4.500 61 4L76 3.800Q82.800 4 82.800 9L81 28.500H56.300z" fill="#e8f0f5"/><path d="M60 10H78V24H60z" fill="#c9dbe6" opacity=".7"/><path d="M57 34H80V47H57z" fill="#f5f8fa" opacity=".7"/><path d="M30 24Q38 19 46 23Q56 24 56.300 34L55 48Q58 56 50 60L46 66L42 58Q30 58 24 50Q16 42 20 36Q22 28 30 24z" fill="#dc9218"/><path d="M28 30Q38 26 46 30Q50 40 46 50Q36 54 28 46Q24 38 28 30z" fill="#eba826"/><path d="M44 50L52 48L54 58L48 62z" fill="#c97814"/><circle cx="42.400" cy="40" r="2.200" fill="#8a6a4a"/></g><g><circle cx="92.8" cy="61.5" r="6.5" fill="rgba(120,170,210,.55)" stroke="#fff" stroke-width="1.2"/><path d="M90.6 58.2l5.6 3.3l-5.6 3.3z" fill="#fff"/></g></svg></figure>
</section>
<section class="panel scheduler" style="left:1038px;top:65px;width:945px;height:1011.5px;background:linear-gradient(178deg,#353840 0,#34363d 25%,#33353b 60%,#323439 100%)">
<h2 class="t sx" style="left:16.8px;top:16.1px;font-size:16px;transform:scaleX(1.1970);color:#f1f1f4;font-weight:700;-webkit-text-stroke:0;">Scheduler</h2>
<div class="b btn-status" style="left:656.4px;top:16.8px;width:126.2px;height:42.8px;border:1.5px solid #78cfc1;border-radius:3.5px"></div>
<span class="t" style="left:696.5px;top:29.7px;font-size:17px;letter-spacing:-0.339px;color:#7bd8c8;">Status</span>
<div class="b btn-publish" style="left:799.5px;top:16.8px;width:126.5px;height:42.8px;background:#69ebdc;border-radius:3.5px"></div>
<span class="t" style="left:836.5px;top:29.7px;font-size:17px;letter-spacing:-0.376px;color:#1d2b2b;">Publish</span>
<span class="t" style="left:16.4px;top:101.8px;font-size:22px;letter-spacing:-1.229px;color:#f1f1f4;font-weight:700;-webkit-text-stroke:0;">Januar</span>
<span class="t" style="left:88.0px;top:101.8px;font-size:22px;letter-spacing:-1.114px;color:#f1f1f4;">2020</span>
<svg class="b" style="left:430.0px;top:111.0px;" width="6" height="10.2" viewBox="0 0 6 10.2" aria-hidden="true"><path d="M5 0.9L0.9 5.1L5 9.300" class="ic" style="stroke:#b6b8c4;stroke-width:1.6"/></svg>
<span class="t" style="left:453.7px;top:107.5px;font-size:15px;letter-spacing:-0.757px;color:#b0b2be;">Today</span>
<svg class="b" style="left:510.4px;top:111.0px;" width="6" height="10.2" viewBox="0 0 6 10.2" aria-hidden="true"><path d="M1 0.9L5.100 5.100L1 9.300" class="ic" style="stroke:#b6b8c4;stroke-width:1.6"/></svg>
<svg class="b" style="left:550.6px;top:106.2px;" width="20" height="20" viewBox="0 0 20 20" aria-hidden="true"><rect x="0.7" y="2.400" width="17.800" height="16.400" rx="1" class="ic" style="stroke:#a3a4b0;stroke-width:1.25"/><path d="M0.700 6.600H18.500M5 0.600V4.200M14.200 0.600V4.200" class="ic" style="stroke:#a3a4b0;stroke-width:1.25"/></svg>
<div class="b seg" style="left:596.3px;top:100.4px;width:236.6px;height:31.6px;border:1.2px solid #c3c4cf;border-radius:3.5px"></div>
<div class="b seg-on" style="left:752.4px;top:100.4px;width:80.5px;height:31.6px;background:#c4c5d5;border-radius:0 3.5px 3.5px 0"></div>
<div class="b" style="left:673.8px;top:100.4px;width:1.2px;height:31.6px;background:#c3c4cf"></div>
<span class="t" style="left:623.5px;top:108.8px;font-size:15px;letter-spacing:-1.088px;color:#b9bac6;">Day</span>
<span class="t" style="left:696.5px;top:108.8px;font-size:15px;letter-spacing:-1.024px;color:#b9bac6;">Week</span>
<span class="t" style="left:773.0px;top:108.1px;font-size:15px;letter-spacing:-0.298px;color:#2d2f37;">Month</span>
<div class="b btn-tl" style="left:846.5px;top:100.4px;width:79.4px;height:31.6px;border:1.2px solid #c3c4cf;border-radius:3.5px"></div>
<span class="t" style="left:860.5px;top:108.8px;font-size:15px;letter-spacing:-0.447px;color:#b9bac6;">Timeline</span>
<span class="t" style="left:115.5px;top:151.6px;font-size:12.4px;color:#f1f1f4;">Mon</span>
<span class="t" style="left:251.3px;top:151.6px;font-size:12.4px;color:#f1f1f4;">Tue</span>
<span class="t" style="left:375.5px;top:151.6px;font-size:12.4px;color:#f1f1f4;">Wed</span>
<span class="t" style="left:509.0px;top:151.6px;font-size:12.4px;color:#f1f1f4;">Thu</span>
<span class="t" style="left:648.7px;top:151.6px;font-size:12.4px;color:#f1f1f4;">Fri</span>
<span class="t" style="left:771.8px;top:151.6px;font-size:12.4px;color:#f1f1f4;">Sat</span>
<span class="t" style="left:899.1px;top:151.6px;font-size:12.4px;color:#f1f1f4;">Sun</span>
<div class="b today" style="left:277.2px;top:304.3px;width:128.5px;height:133.7px;background:#27282d"></div>
<div class="b grid" style="left:16.4px;top:169.9px;width:910.2px;height:669.9px;border:1.2px solid #a1a2a9;border-radius:3px"></div>
<div class="b gl" style="left:144.7px;top:170.5px;width:1.2px;height:668.7px;"></div>
<div class="b gl" style="left:276.6px;top:170.5px;width:1.2px;height:668.7px;"></div>
<div class="b gl" style="left:405.1px;top:170.5px;width:1.2px;height:668.7px;"></div>
<div class="b gl" style="left:535.5px;top:170.5px;width:1.2px;height:668.7px;"></div>
<div class="b gl" style="left:664.0px;top:170.5px;width:1.2px;height:668.7px;"></div>
<div class="b gl" style="left:795.0px;top:170.5px;width:1.2px;height:668.7px;"></div>
<div class="b gl" style="left:17.0px;top:303.7px;width:909.0px;height:1.2px;"></div>
<div class="b gl" style="left:17.0px;top:437.4px;width:909.0px;height:1.2px;"></div>
<div class="b gl" style="left:17.0px;top:570.2px;width:909.0px;height:1.2px;"></div>
<div class="b gl" style="left:17.0px;top:704.9px;width:909.0px;height:1.2px;"></div>
<span class="t" style="left:128.4px;top:175.4px;font-size:12px;color:#f1f1f4;">01</span>
<span class="t" style="left:260.3px;top:175.4px;font-size:12px;color:#f1f1f4;">02</span>
<span class="t" style="left:388.8px;top:175.4px;font-size:12px;color:#f1f1f4;">03</span>
<span class="t" style="left:519.2px;top:175.4px;font-size:12px;color:#f1f1f4;">04</span>
<span class="t" style="left:647.7px;top:175.4px;font-size:12px;color:#f1f1f4;">05</span>
<span class="t" style="left:778.7px;top:175.4px;font-size:12px;color:#f1f1f4;">06</span>
<span class="t" style="left:909.1px;top:175.4px;font-size:12px;color:#f1f1f4;">07</span>
<span class="t" style="left:128.4px;top:309.2px;font-size:12px;color:#f1f1f4;">08</span>
<span class="t" style="left:260.3px;top:309.2px;font-size:12px;color:#f1f1f4;">09</span>
<span class="t" style="left:388.8px;top:309.2px;font-size:12px;color:#5fe0c8;font-weight:700;-webkit-text-stroke:0;">10</span>
<span class="t" style="left:520.0px;top:309.2px;font-size:12px;color:#f1f1f4;">11</span>
<span class="t" style="left:647.7px;top:309.2px;font-size:12px;color:#f1f1f4;">12</span>
<span class="t" style="left:778.7px;top:309.2px;font-size:12px;color:#f1f1f4;">13</span>
<span class="t" style="left:909.1px;top:309.2px;font-size:12px;color:#f1f1f4;">14</span>
<span class="t" style="left:128.4px;top:442.9px;font-size:12px;color:#f1f1f4;">15</span>
<span class="t" style="left:260.3px;top:442.9px;font-size:12px;color:#f1f1f4;">16</span>
<span class="t" style="left:388.8px;top:442.9px;font-size:12px;color:#f1f1f4;">17</span>
<span class="t" style="left:519.2px;top:442.9px;font-size:12px;color:#f1f1f4;">18</span>
<span class="t" style="left:647.7px;top:442.9px;font-size:12px;color:#f1f1f4;">19</span>
<span class="t" style="left:778.7px;top:442.9px;font-size:12px;color:#f1f1f4;">20</span>
<span class="t" style="left:909.1px;top:442.9px;font-size:12px;color:#f1f1f4;">21</span>
<span class="t" style="left:128.4px;top:575.7px;font-size:12px;color:#f1f1f4;">22</span>
<span class="t" style="left:260.3px;top:575.7px;font-size:12px;color:#f1f1f4;">23</span>
<span class="t" style="left:388.8px;top:575.7px;font-size:12px;color:#f1f1f4;">24</span>
<span class="t" style="left:519.2px;top:575.7px;font-size:12px;color:#f1f1f4;">25</span>
<span class="t" style="left:647.7px;top:575.7px;font-size:12px;color:#f1f1f4;">26</span>
<span class="t" style="left:778.7px;top:575.7px;font-size:12px;color:#f1f1f4;">27</span>
<span class="t" style="left:909.1px;top:575.7px;font-size:12px;color:#f1f1f4;">28</span>
<span class="t" style="left:128.4px;top:710.4px;font-size:12px;color:#f1f1f4;">29</span>
<span class="t" style="left:260.3px;top:710.4px;font-size:12px;color:#f1f1f4;">30</span>
<span class="t" style="left:388.8px;top:710.4px;font-size:12px;color:#f1f1f4;">31</span>
<span class="t" style="left:519.2px;top:710.4px;font-size:12px;color:#a2a4b0;">01</span>
<span class="t" style="left:647.7px;top:710.4px;font-size:12px;color:#a2a4b0;">02</span>
<span class="t" style="left:778.7px;top:710.4px;font-size:12px;color:#a2a4b0;">03</span>
<span class="t" style="left:909.1px;top:710.4px;font-size:12px;color:#a2a4b0;">04</span>
<div class="ev" style="left:328.3px;top:190.4px;width:597.3px;background:#3d6377;padding-left:2.4px;border-radius:2.5px 1.5px 1.5px 2.5px;letter-spacing:-0.190px;">Summer Special Line 2020</div>
<div class="ev" style="left:275.2px;top:206.2px;width:450.1px;background:#6a9bc4;padding-left:4.4px;letter-spacing:-0.142px;">Partner Ads</div>
<div class="ev" style="left:527.0px;top:222.0px;width:250.6px;background:#6b3f82;padding-left:4.4px;letter-spacing:-0.137px;">Autumn Drop 2020</div>
<div class="ev" style="left:228.2px;top:325.2px;width:697.4px;background:#3d6377;padding-left:16px;border-radius:2.5px 1.5px 1.5px 2.5px;letter-spacing:-.1px"><svg class="b" style="left:5.4px;top:2px" width="8" height="11" viewBox="0 0 8 11" aria-hidden="true"><path d="M3.2 0.600V8.200" stroke="#f3f5f8" stroke-width="1.1" fill="none"/><path d="M3.2 0.700Q4.200 2.800 6.600 3.600Q7 5 6 6.200Q6.200 4.400 3.200 3.200z" fill="#f3f5f8"/><ellipse cx="2" cy="8.400" rx="1.900" ry="1.500" fill="#f3f5f8"/></svg>FM4</div>
<div class="ev" style="left:427.5px;top:341.0px;width:498.1px;background:#6a9bc4;padding-left:4.4px;border-radius:2.5px 1.5px 1.5px 2.5px;letter-spacing:-0.142px;">Partner Ads</div>
<div class="ev" style="left:228.2px;top:460.0px;width:697.4px;background:#3d6377;padding-left:4.4px;border-radius:2.5px 1.5px 1.5px 2.5px;letter-spacing:-0.190px;">Summer Special Line 2020</div>
<div class="ev" style="left:327.1px;top:591.9px;width:498.6px;background:#6b3f82;padding-left:4.4px;letter-spacing:-0.137px;">Autumn Drop 2020</div>
<div class="ev" style="left:240.3px;top:726.6px;width:227.9px;background:#47806c;padding-left:4.4px;letter-spacing:-0.418px;">Misc 2021</div>
</section>
<footer class="b brand" style="left:1838px;top:1088px;width:150px;height:28px;will-change:transform"><svg class="b" style="left:0;top:0" width="150" height="28" viewBox="0 0 150 28" role="img" aria-label="LUNIXO"><g fill="none" stroke="#ececf0" stroke-width="1.15" stroke-linecap="butt"><path d="M3.6 5.4H86C97 5.4 108 21.4 119 21.4H145" /><path d="M3.6 21.4H86C97 21.4 108 5.4 119 5.4H145"/></g><text y="17.1" font-family="DejaVu Sans Light, DejaVu Sans, Liberation Sans, sans-serif" font-weight="200" font-size="10.6" fill="#ececf0" stroke="#ececf0" stroke-width="0.3"><tspan x="-0.2" textLength="30.4" lengthAdjust="spacingAndGlyphs">L</tspan><tspan x="27.4" textLength="33.2" lengthAdjust="spacingAndGlyphs">U</tspan><tspan x="53.8" textLength="35.5" lengthAdjust="spacingAndGlyphs">N</tspan><tspan x="81.6" textLength="11.8" lengthAdjust="spacingAndGlyphs">I</tspan><tspan x="94.1" textLength="17.3" lengthAdjust="spacingAndGlyphs">X</tspan><tspan x="110.9" textLength="35.9" lengthAdjust="spacingAndGlyphs">O</tspan></text></svg></footer>
</div>
</body>
</html>
